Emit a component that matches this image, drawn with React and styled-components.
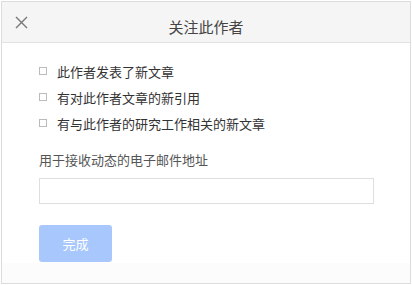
import React, { useState } from "react";
import styled, { createGlobalStyle } from "styled-components";

const GlobalStyle = createGlobalStyle`
  html, body {
    margin: 0;
    padding: 0;
    background: #ffffff;
  }
  * {
    box-sizing: border-box;
  }
  body {
    font-family: "Noto Sans CJK SC", "Liberation Sans", sans-serif;
  }
`;

const options = [
  "此作者发表了新文章",
  "有对此作者文章的新引用",
  "有与此作者的研究工作相关的新文章",
];

export default function App() {
  const [checked, setChecked] = useState([false, false, false]);
  const [email, setEmail] = useState("");

  function toggle(i) {
    setChecked(checked.map((c, j) => (j === i ? !c : c)));
  }

  return (
    <>
      <GlobalStyle />
      <Dialog>
        <Header>
          <CloseButton aria-label="关闭">
            <svg width="13" height="13" viewBox="0 0 13 13">
              <path d="M1 1 L12 12 M12 1 L1 12" stroke="#777" strokeWidth="1.4" fill="none" />
            </svg>
          </CloseButton>
          <Title>关注此作者</Title>
        </Header>
        <Body>
          <OptionList>
            {options.map((text, i) => (
              <Option key={text} onClick={() => toggle(i)}>
                <Box $checked={checked[i]} />
                <span>{text}</span>
              </Option>
            ))}
          </OptionList>
          <Label htmlFor="email">用于接收动态的电子邮件地址</Label>
          <EmailInput id="email" type="email" value={email} onChange={(e) => setEmail(e.target.value)} />
          <DoneButton disabled={!email}>完成</DoneButton>
        </Body>
        <Footer />
      </Dialog>
    </>
  );
}

const Dialog = styled.div`
  margin: 1px 0 0 1px;
  width: 410px;
  height: 283px;
  border: 1px solid #dcdcdc;
  background: #fff;
  display: flex;
  flex-direction: column;
  overflow: hidden;
`;

const Header = styled.header`
  position: relative;
  flex-shrink: 0;
  height: 41px;
  background: #f5f5f5;
  border-bottom: 1px solid #e2e2e2;
  display: flex;
  align-items: center;
  justify-content: center;
`;

const CloseButton = styled.button`
  position: absolute;
  left: 12px;
  top: 13px;
  width: 15px;
  height: 15px;
  padding: 0;
  border: none;
  background: none;
  display: flex;
  align-items: center;
  justify-content: center;
  cursor: pointer;
`;

const Title = styled.h2`
  margin: 8px 0 0;
  font-size: 15px;
  font-weight: 400;
  color: #444;
`;

const Body = styled.div`
  flex: 1;
  padding: 15px 37px 0 37px;
  display: flex;
  flex-direction: column;
`;

const OptionList = styled.div`
  display: flex;
  flex-direction: column;
`;

const Option = styled.label`
  height: 26px;
  display: flex;
  align-items: center;
  gap: 10px;
  font-size: 13px;
  color: #333;
  cursor: pointer;
`;

const Box = styled.span`
  width: 8px;
  height: 8px;
  border: 1px solid #bbb;
  background: ${(p) => (p.$checked ? "#4d90fe" : "#fff")};
`;

const Label = styled.label`
  margin-top: 14px;
  font-size: 13px;
  color: #555;
  line-height: 20px;
`;

const EmailInput = styled.input`
  margin-top: 8px;
  width: 335px;
  height: 26px;
  flex-shrink: 0;
  border: 1px solid #dedede;
  outline: none;
  padding: 0 6px;
  font-size: 13px;
`;

const DoneButton = styled.button`
  margin-top: 21px;
  width: 73px;
  height: 37px;
  flex-shrink: 0;
  border: none;
  border-radius: 3px;
  background: #a8c8fd;
  color: #fff;
  font-size: 13px;
  font-family: inherit;
  cursor: pointer;

  &:disabled {
    cursor: default;
  }
`;

const Footer = styled.div`
  height: 20px;
  flex-shrink: 0;
  background: #fcfcfc;
`;
